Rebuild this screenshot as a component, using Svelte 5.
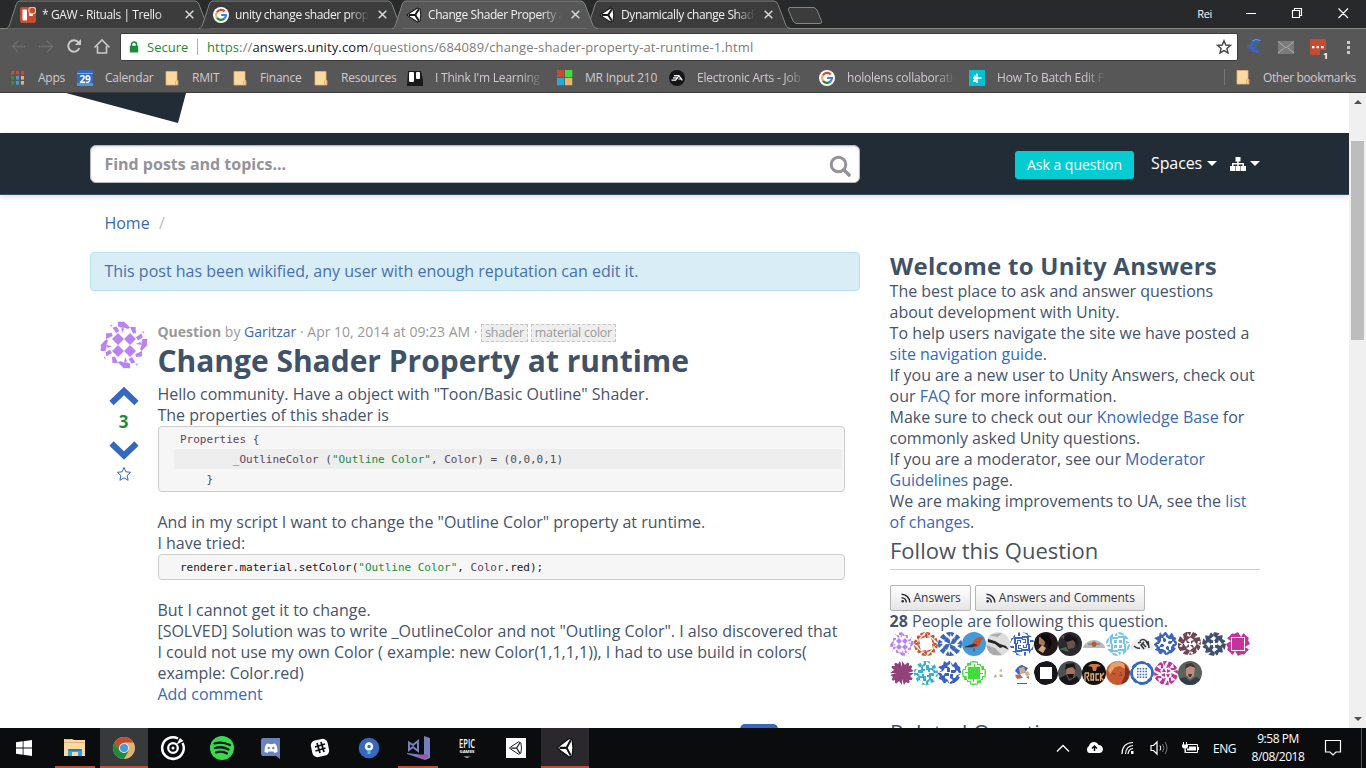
<script>
  const tabs = [
    { icon: 'trello', title: '* GAW - Rituals | Trello' },
    { icon: 'google', title: 'unity change shader prop' },
    { icon: 'unity', title: 'Change Shader Property a', active: true },
    { icon: 'unity', title: 'Dynamically change Shad' }
  ];
  const bookmarks = [
    { icon: 'apps', label: 'Apps' },
    { icon: 'calendar', label: 'Calendar' },
    { icon: 'folder', label: 'RMIT' },
    { icon: 'folder', label: 'Finance' },
    { icon: 'folder', label: 'Resources' },
    { icon: 'board', label: "I Think I'm Learning", fade: true },
    { icon: 'windows', label: 'MR Input 210' },
    { icon: 'ea', label: 'Electronic Arts - Job', fade: true },
    { icon: 'google', label: 'hololens collaboratio', fade: true },
    { icon: 'plus', label: 'How To Batch Edit Ph', fade: true }
  ];
  const diamonds = 'M15 6l3 3l-3 3l-3-3zM12 .3L15 3.200L14 4L12 3.200zM15 3L17.800 3L18 6L16.500 6.300zM18 8L20.800 6.300L21.300 8.300L19 9.700zM21.300 9H24L23 12.500L20.800 11.300zM18 11.500L20 10.500L21.300 12zM21 5l1.400 .5l-.7 .8zM12 .3L9 1L10 3.200L12 3z';
  const avatars = [
    [
      { c: '#b983f5', d: diamonds },
      { c: '#c4532f', d: 'M12 0l3 4l2-4zM16 4l5-2l-1 5zM20 7l4-2v6zM19 10l5 2l-4 2zM12 4l5 1l-5 1zM17 6l3 3l-1 3z' },
      { c: '#3c66bd', d: 'M12 12l3-6l4 3l-3 3zM16 6l4-6l4 4l-6 5zM12 0h5l-3 5zM19 12l5-5v6z' },
      { kind: 'bird' }, { kind: 'cloudy' },
      { c: '#3c66bd', d: 'M12 4h6v9h-1v-7h-5zM12 7h4v4h-3v-1h2V8h-3zM18 3l6 2h-5v8h-2zM12 0l6 1v3l-2-2zM20 8h4v2h-4z' },
      { kind: 'woman' }, { kind: 'dark' }, { kind: 'wide' },
      { c: '#78c4e8', d: 'M12 4h7v8h-2v-6h-5zM13 8h3v3h-3zM12 0h4l3 4l-6-2zM19 3l4 4h-4zM20 9l4 1l-4 2z' },
      { kind: 'sketch' },
      { c: '#3c66bd', d: 'M12 0l3 4l3-4l2 5l4 1l-3 2l4 4h-4l-2-3l-2 3h-2V9h3v-2h-3l-3-2zM14 9.500h2v2h-2z' },
      { c: '#704452', d: 'M12 5l3-5l5 2l-4 4l6-1l3 5l-5-1l-1 4l-3-4l-3 3V9l3-1zM20 12l4-3v4z' },
      { c: '#405070', d: 'M12 0l6 1l-3 3l6-1l-1 4l4 2l-4 3l-3-4l-2 4v-3h-3l2-3l-3-3zM13 8h2v3h-2z' },
      { c: '#c0349b', d: 'M12 6h6v6h-6zM12 0l3 5l3-5l2 4l4 1l-2 3l2 4h-5V5h-7z' }
    ],
    [
      { c: '#92437b', d: 'M12 12V0l3 4l4-4v5l5-2l-3 5l3 2l-6 2zM13 6l4 3l-3 2z' },
      { c: '#39b0d0', d: 'M12 4h3v3h3v2h-2v2h-2V9h-2V7zM12 0h5l-2 3l4 2l2-3l1 5l-3 1l3 2l2-1v3h-4l-2-3V5z' },
      { c: '#3c60c0', d: 'M12 0l3 4l3-4l2 5l4 1l-2 3l3 3h-4l-2-3l-2 3h-2V9h2V7l-3-2zM13 9h2v3h-2z' },
      { c: '#42dd38', d: 'M12 6h6v6h-6zM12 0h4v3h3v2h-1V4h-3V1.500h-3zM12 3h1v3h-1zM19 5h3v3h2v4h-1.500V9h-3z' },
      { c: '#c6ad89', d: 'M13.500 7.500h2.500v3h-2.500z' }, { kind: 'sonic' },
      { c: '#17161c', d: 'M12 0h5l5 5l2 7h-6V6h-6z' },
      { kind: 'man' }, { kind: 'rock' }, { kind: 'orange' },
      { c: '#3568bf', d: 'M12 0q4 0 4 2q5-1 5 3q3 1 3 7h-3q0-5-3-6q-1-3-6-3zM12.700 7h1.600v1.600h-1.600zM15.400 7h1.600v1.600h-1.600zM15.400 9.700h1.600v1.600h-1.600zM12.700 9.700h1.600v1.600h-1.600z' },
      { c: '#c0349b', d: 'M12 7l3-7l4 2l-4 5h5l-1-4l5 3l-3 3h-4l-1-3zM13 8l4 2l-4 2zM19 10l5-1v4z' },
      { kind: 'grin' }
    ]
  ];
  const taskItems = ['explorer', 'chrome', 'groove', 'spotify', 'discord', 'slack', 'maps', 'vs', 'epic', 'unitybox', 'unityapp'];
</script>

{#snippet unityMark(edge, line)}
  <path d="M1 8L4 5.800L11.500 1L14 2L14.800 8L14 14L11.500 15L4 10.200z" fill="#fff" stroke={edge} stroke-width="1.100" stroke-linejoin="round" />
  <path d="M3 8H9.200M9.200 8L12.800 2.300M9.200 8l3.600 5.700" fill="none" stroke={edge} stroke-width={line} />
{/snippet}

{#snippet favicon(name)}
  <svg class="fav" viewBox="0 0 16 16">
    {#if name === 'trello'}
      <rect width="16" height="16" rx="2" fill="#c54c31" />
      <rect x="2.5" y="2.5" width="4.5" height="11" rx=".7" fill="#fff" /><rect x="9" y="4" width="4" height="5" rx=".7" fill="#fff" />
      <circle cx="12.300" cy="3.500" r="4" fill="#f2c3a2" /><circle cx="12.300" cy="3.500" r="2.800" fill="#c54c31" />
    {:else if name === 'google'}
      <circle cx="8" cy="8" r="8" fill="#fff" />
      <g fill="none" stroke-width="2.2">
        <path d="M3.9 5.3A5 5 0 0 1 11.7 4.4" stroke="#d44a30" /><path d="M3.9 5.3A5 5 0 0 0 4 10.8" stroke="#e5b273" />
        <path d="M4 10.8A5 5 0 0 0 11.3 11.7" stroke="#1a8c3a" /><path d="M11.3 11.7A5 5 0 0 0 13 8H8.2" stroke="#3c7fd6" />
      </g>
    {:else if name === 'unity'}
      {@render unityMark('#18191b', 2)}
    {:else if name === 'apps'}
      {#each [0, 1, 2] as r}{#each [0, 1, 2] as c}
        <rect x={1 + c * 5} y={1 + r * 5} width="3" height="3.6" fill={['#c54c31', '#c54c31', '#c54c31', '#1a9a40', '#4a9ad6', '#e5b273', '#1a9a40', '#4a9ad6', '#e5b273'][r * 3 + c]} />
      {/each}{/each}
    {:else if name === 'calendar'}
      <rect y="0" width="16" height="16" rx="1.5" fill="#3568bf" /><path d="M0 3h16v1H0z" fill="#78aee0" /><path d="M0 13h16v3H0z" fill="#4a9ad6" />
      <text x="8" y="12.5" text-anchor="middle" font-family="Open Sans, sans-serif" font-size="10" font-weight="700" fill="#fff">29</text>
    {:else if name === 'folder'}
      <path d="M2 1.500h11v9h1V15H2z" fill="#fcd9a0" stroke="#e5b273" stroke-width=".8" /><path d="M11.500 14.500v-3.500h2v3.500z" fill="#fcd9a0" stroke="#e5b273" />
    {:else if name === 'board'}
      <path d="M1 1h13l2 9v6H0z" fill="#19181b" /><rect x="2" y="2" width="5" height="10" rx="1" fill="#fff" /><rect x="9" y="2" width="4" height="7" rx="1" fill="#fff" />
    {:else if name === 'windows'}
      <path d="M0 0h7.300v7.300H0z" fill="#c54c31" /><path d="M8 0h7.300v7.300H8z" fill="#42dd38" /><path d="M0 8h7.300v7.300H0z" fill="#25a9d8" /><path d="M8 8h7.300v7.300H8z" fill="#e5b273" />
    {:else if name === 'ea'}
      <circle cx="8" cy="8" r="8" fill="#141517" />
      <path d="M5 5.700h4.500M4 7.900h4M2.500 10.200h4.200l3.300-4.500l3.300 4.700M9.500 9h2.500" stroke="#fff" stroke-width="1.200" fill="none" />
    {:else if name === 'plus'}
      <rect width="16" height="16" fill="#05bfd2" /><path d="M8 3.500v9.500M4 8h8.500M6 5.500V12M4 11h3" stroke="#fff" stroke-width="1.500" fill="none" />
    {/if}
  </svg>
{/snippet}

{#snippet rss()}
  <svg class="rss" viewBox="0 0 10 10"><circle cx="1.700" cy="8.300" r="1.300" fill="#2a2e34" /><path d="M.5 4.700A4.800 4.800 0 0 1 5.300 9.500M.5 1.200A8.300 8.300 0 0 1 8.800 9.500" fill="none" stroke="#2a2e34" stroke-width="1.500" /></svg>
{/snippet}

{#snippet avatar(a)}
  <svg class="avatar" viewBox="0 0 24 24">
    <g clip-path="circle(12px at 12px 12px)">
      {#if a.d}
        {#each [0, 90, 180, 270] as r}<path d={a.d} fill={a.c} transform="rotate({r} 12 12)" />{/each}
      {:else if a.kind === 'bird'}
        <path d="M0 0h24v24H0z" fill="#459bd8" /><path d="M3 15l8-4c1-4 4-5 6-6l3 0l2 2l-3 1c0 5-3 8-7 7l-4-1z" fill="#c4532f" /><path d="M3 15l9-3l3 1l-5 2zM12 16v4" fill="#40343e" stroke="#40343e" stroke-width=".7" />
      {:else if a.kind === 'cloudy'}
        <path d="M0 0h24v24H0z" fill="#dedede" /><path d="M2 7l7 2l5 3l6 2l3 4l-6-3l-3 1l-5-4l-7-2z" fill="#252628" /><path d="M0 13l9 3l7 7H4zM2 3l10 2l4-4z" fill="#aaa" />
      {:else if a.kind === 'woman'}
        <path d="M0 0h24v24H0z" fill="#211719" /><path d="M5 5l4 1l2 5l-1 3l-5-2z" fill="#a97859" /><path d="M7 2h8l3 10l-3 6l-3-8l-5-4z" fill="#0d0b0d" /><path d="M8 13l4 3l-3 5l-5-3z" fill="#d3a77c" />
      {:else if a.kind === 'dark'}
        <path d="M0 0h24v24H0z" fill="#282b2d" /><path d="M8 7l6-3l4 5l-2 7l-6 1z" fill="#6d514f" /><path d="M5 7l5-5l9 4l1 8l-5-6l-6 2z" fill="#161519" /><path d="M1 17l7-2l3 5zM3 5l3-2v4z" fill="#53625c" />
      {:else if a.kind === 'wide'}
        <path d="M0 8h24v8H0z" fill="#b9b9b9" /><path d="M6 12h12" stroke="#707070" /><circle cx="12" cy="12" r="2.500" fill="#c4532f" /><path d="M10 13h4v1.500h-4z" fill="#31936b" />
      {:else if a.kind === 'sketch'}
        <path d="M0 6h24v12H0z" fill="#eee" /><path d="M4 14q3 3 6 2M10 9q3-3 6 0l2 4M14 10l-3 3l3 4M18 9l1 7M12 11l4 4M8 11l3-1" stroke="#35373a" stroke-width="1.600" fill="none" />
      {:else if a.kind === 'sonic'}
        <path d="M5 3l7 1l6 3l-3 5l-7 1l-4-4z" fill="#3568bf" /><path d="M9 7l5-1l2 5l-6 2zM15 12l3-2l2 4l-4 1z" fill="#d7aa82" /><path d="M5 14l5-1l3 4l-6 1zM16 16l3-1v3z" fill="#a96f6b" /><path d="M7 22h10v1H7z" fill="#1a8c3a" />
      {:else if a.kind === 'man'}
        <path d="M0 0h24v24H0z" fill="#4c5053" /><path d="M9 6l5-1l3 5l-1 7l-5 1l-3-6z" fill="#a57260" /><path d="M7 9l1-6l8-1l2 7l-3-3l-5 1zM9 13l7 0l-1 4l-4 1zM0 18l8-4l3 6l8-5l5 9H0z" fill="#171719" />
      {:else if a.kind === 'rock'}
        <path d="M0 0h24v24H0z" fill="#151012" /><path d="M6 5l3-2h7l3 2l-4 1l-1 4h-3L10 6z" fill="#c77843" /><path d="M3 12h3.500v3l-1.500 1l2 4M3 12v8M9 13h2.500v6H9zM17 13h-3v6h3M18.500 12v8M22 12l-3.500 4l3.500 4" stroke="#e0b077" stroke-width="1.300" fill="none" />
      {:else if a.kind === 'orange'}
        <path d="M0 0h24v24H0z" fill="#c85a31" /><path d="M5 3l7-3l6 3l1 5l-5-3l-5 1l-5 7l-2-4z" fill="#e5a36c" /><path d="M19 3l5 8l-3 10l-6 2l4-9z" fill="#7e3329" /><path d="M6 12l3 1M14 11l2 3l-3 1" stroke="#86402b" fill="none" />
      {:else}
        <path d="M0 0h24v24H0z" fill="#59645f" /><path d="M8 5l5-2l4 4l-1 8l-4 3l-4-4z" fill="#bd8e7b" /><path d="M7 8l1-5l6-1l4 5l-6-2zM10 13h4l-1 3h-2z" fill="#4a3434" /><path d="M0 18l7-2l5 4l6-4l6 3v6H0z" fill="#333d48" />
      {/if}
    </g>
  </svg>
{/snippet}

<div class="screen">
  <header class="chrome">
    <div class="tabstrip">
      {#each tabs as t}
        <div class="tab" class:active={t.active}>
          <svg class="shape" viewBox="0 0 206 28"><path d="M0 28C2 28 3 26 4 23L10.500 3Q11.500 .5 14 .5H189Q191.500 .5 193 4L201 25Q202 28 206 28" fill={t.active ? '#575757' : '#3c3c3c'} stroke="#858581" /></svg>
          {@render favicon(t.icon)}
          <span class="title">{t.title}</span>
          <svg class="close" viewBox="0 0 9 9"><path d="M.7 .7l7.600 7.600M8.300 .7L.7 8.300" stroke="#d8d8d8" stroke-width="1.500" /></svg>
        </div>
      {/each}
      <svg class="newtab" viewBox="0 0 36 19"><path d="M3 1.500H27L30 4L34.500 15Q35 17.500 33 17.500H9L6 15L1.500 4Q1 1.500 3 1.500z" fill="#3c3c3c" stroke="#858581" /></svg>
      <span class="user">Rei</span>
      <svg class="winbtns" viewBox="0 0 136 28" fill="none" stroke="#fff"><path d="M16 13.500h10M62.500 10.500h7v7h-7zM64.500 10.500V8.500h7v7H69.500M108.500 8.500l9.500 9.500M118 8.500l-9.500 9.500" stroke-width="1.150" /></svg>
    </div>
    <div class="toolbar">
      <svg class="nav" viewBox="0 0 112 30" fill="none">
        <path d="M25 14.500H13M18 9l-5.500 5.500L18 20M39 14.500H52M47 9l5.500 5.500L47 20" stroke="#747474" stroke-width="1.300" stroke-dasharray="1.500 .6" />
        <path d="M78.500 10.500A5.700 5.700 0 1 0 79.300 16" stroke="#c9c9c9" stroke-width="2" /><path d="M81 7v6h-6z" fill="#c9c9c9" />
        <path d="M94.500 15.500L102 8l7.500 7.500M97.500 14v7h9v-7" stroke="#c9c9c9" stroke-width="1.600" />
      </svg>
      <div class="omnibox">
        <svg class="lock" viewBox="0 0 10 12"><path d="M2.500 6V3.500a2.500 2.500 0 0 1 5 0V6" fill="none" stroke="#1a8c3a" stroke-width="1.500" /><rect x=".8" y="4.800" width="8.400" height="6.600" rx=".7" fill="#1a8c3a" /></svg>
        <span class="secure">Secure</span><i class="bar"></i>
        <span class="url"><span class="https">https</span>://<b>answers.unity.com</b>/questions/684089/change-shader-property-at-runtime-1.html</span>
        <svg class="star" viewBox="0 0 16 16"><path d="M8 1.800l1.800 4.200l4.600.4l-3.500 3l1.100 4.500L8 11.500l-4 2.400l1.100-4.500l-3.500-3l4.600-.4z" fill="none" stroke="#4b4b4b" stroke-width="1.500" /></svg>
      </div>
      <svg class="ext" viewBox="0 0 128 34">
        <path d="M22 11.500Q15 9 13 16.500Q14 22 21 21" fill="none" stroke="#3c66bd" stroke-width="3" /><path d="M9 15.500h11M9 18h10" stroke="#3c66bd" stroke-width="1.500" /><path d="M14 11Q18 8 22.500 10.500" stroke="#57a3e0" fill="none" />
        <rect x="40" y="11" width="16" height="13" fill="#7b7b7b" /><path d="M40 11.500l8 6.500l8-6.500M40 23l6-5M56 23l-6-5" fill="none" stroke="#b1b1b1" stroke-width="1" />
        <rect x="72" y="9" width="16" height="16" rx="2" fill="#c54c31" /><path d="M74 16h2.500v2.300H74zM78.500 16H81v2.300h-2.500zM83 16h2.500v2.300H83z" fill="#fff" />
        <rect x="82" y="20" width="11" height="10" fill="#575757" /><text x="85" y="29" font-family="Open Sans, sans-serif" font-size="9" font-weight="700" fill="#fff">1</text>
        <path d="M109 11h3v3h-3zM109 16h3v3h-3zM109 21h3v3h-3z" fill="#c9c9c9" />
      </svg>
    </div>
    <nav class="bookmarks">
      {#each bookmarks as b}
        <span class="bm">{@render favicon(b.icon)}<span class="label" class:fade={b.fade}>{b.label}</span></span>
      {/each}
      <span class="bm other">{@render favicon('folder')}<span class="label">Other bookmarks</span></span>
    </nav>
  </header>

  <div class="viewport">
    <div class="page">
      <div class="logo"><svg viewBox="0 0 200 40"><path d="M66 0H186L178 30z" fill="#222c37" /></svg></div>
      <div class="navbar">
        <div class="search"><span>Find posts and topics...</span>
          <svg viewBox="0 0 22 22" fill="none" stroke="#95929a"><circle cx="9.500" cy="9.500" r="7.300" stroke-width="3" /><path d="M15 15l5 5" stroke-width="3.600" stroke-linecap="round" /></svg>
        </div>
        <div class="ask">Ask a question</div>
        <span class="spaces">Spaces</span><i class="caret"></i>
        <svg class="sitemap" viewBox="0 0 16 14"><path d="M5.500 0h5v4.500H8.700V6H14v3h2v5h-5V9h1.500V7.500H8.700V9h1.800v5h-5V9h1.800V7.500H3.500V9H5v5H0V9h2V6h5.300V4.500H5.500z" fill="#fff" /></svg><i class="caret"></i>
      </div>
      <div class="columns">
        <main>
          <div class="crumbs"><a href="#home">Home</a><span>/</span></div>
          <div class="alert">This post has been wikified, any user with enough reputation can edit it.</div>
          <article>
            <aside class="votes">
              <div class="face">{@render avatar(avatars[0][0])}</div>
              <svg class="arrow" viewBox="0 0 30 20"><path d="M2.500 17L15 5l12.500 12" fill="none" stroke="#3568bf" stroke-width="6" /></svg>
              <b>3</b>
              <svg class="arrow down" viewBox="0 0 30 20"><path d="M2.500 3.500L15 15.500l12.500-12" fill="none" stroke="#3568bf" stroke-width="6" /></svg>
              <svg class="fave" viewBox="0 0 16 16"><path d="M8 1.500l1.900 4.300l4.700.5l-3.500 3.200l1 4.800L8 11.800l-4.100 2.500l1-4.800L1.400 6.300l4.700-.5z" fill="none" stroke="#3568bf" stroke-width="1" /></svg>
            </aside>
            <div class="post">
              <div class="meta"><b>Question</b> by <a href="#user">Garitzar</a> · Apr 10, 2014 at 09:23 AM · <span class="tag">shader</span><span class="tag">material color</span></div>
              <h1>Change Shader Property at runtime</h1>
              <p>Hello community. Have a object with "Toon/Basic Outline" Shader.<br />The properties of this shader is</p>
              <pre><span class="ln"><i>Properties</i> {'{'}</span><span class="ln odd">{'        '}<i>_OutlineColor</i> (<em>"Outline Color"</em>, <i>Color</i>) = (0,0,0,1)</span><span class="ln">{'    }'}</span></pre>
              <p>And in my script I want to change the "Outline Color" property at runtime.<br />I have tried:</p>
              <pre class="one"><span class="ln plain">renderer.material.setColor(<em>"Outline Color"</em>, <i>Color</i>.red);</span></pre>
              <p>But I cannot get it to change.<br />[SOLVED] Solution was to write _OutlineColor and not "Outling Color". I also discovered that<br />I could not use my own Color ( example: new Color(1,1,1,1)), I had to use build in colors(<br />example: Color.red)<br /><a href="#comment">Add comment</a></p>
            </div>
          </article>
          <div class="below"></div>
        </main>
        <aside class="side">
          <h2>Welcome to Unity Answers</h2>
          <p>The best place to ask and answer questions<br />about development with Unity.<br />To help users navigate the site we have posted a<br /><a href="#nav">site navigation guide</a>.<br />If you are a new user to Unity Answers, check out<br />our <a href="#faq">FAQ</a> for more information.<br />Make sure to check out our <a href="#kb">Knowledge Base</a> for<br />commonly asked Unity questions.<br />If you are a moderator, see our <a href="#mod">Moderator<br />Guidelines</a> page.<br />We are making improvements to UA, see the <a href="#list">list<br />of changes</a>.</p>
          <h3>Follow this Question</h3>
          <div class="feeds"><span>{@render rss()}Answers</span><span>{@render rss()}Answers and Comments</span></div>
          <p class="count"><b>28</b> People are following this question.</p>
          {#each avatars as row}
            <div class="faces">{#each row as a}{@render avatar(a)}{/each}</div>
          {/each}
          <h3 class="related">Related Questions</h3>
        </aside>
      </div>
    </div>
    <div class="scroll"><i class="up"></i><div class="thumb"></div><i class="dn"></i></div>
  </div>

  <footer>
    <div class="start"><svg viewBox="0 0 16 16"><path d="M0 2.300L6.700 1.300v6.300H0zM7.500 1.200L16 0v7.600H7.500zM0 8.400h6.700v6.300L0 13.700zM7.500 8.400H16V16l-8.500-1.200z" fill="#fff" /></svg></div>
    {#each taskItems as t}
      <div class="task {t}">
        <svg viewBox="0 0 26 26">
          {#if t === 'explorer'}
            <path d="M2 4h8l2 1h11v16H2z" fill="#fcd9a0" /><path d="M3 4h6v1H3zM2 7h21v1H2z" fill="#e5b273" /><path d="M6 14h14v7h-4v-4h-6v4H6z" fill="#25a9d8" /><path d="M6 14h14l-1 2H7z" fill="#1682c4" />
          {:else if t === 'chrome'}
            <circle cx="13" cy="13" r="11" fill="#e5b273" /><path d="M3.500 7.500A11 11 0 0 1 22.500 7.500H13L8 15z" fill="#c54c31" /><path d="M3.500 7.500A11 11 0 0 0 13 24L18 15L13 18L8 15z" fill="#1a8c3a" /><circle cx="13" cy="13" r="5" fill="#e8eef2" /><circle cx="13" cy="13" r="4" fill="#459bd8" />
          {:else if t === 'groove'}
            <path d="M18 3.500A10.800 10.800 0 1 0 22.500 8" fill="none" stroke="#fff" stroke-width="2.500" /><circle cx="13" cy="13" r="4.800" fill="none" stroke="#fff" stroke-width="2.300" /><circle cx="13" cy="13" r="1.500" fill="#fff" /><path d="M16.500 9.500L20 3l3.500 3z" fill="#fff" />
          {:else if t === 'spotify'}
            <circle cx="13" cy="13" r="12" fill="#36dc4c" /><path d="M5.500 8.500Q13 6 21 10M6 13Q13 11 19.500 14.500M7 17.500Q13 15.500 18 18.500" fill="none" stroke="#10151a" stroke-width="2.300" stroke-linecap="round" />
          {:else if t === 'discord'}
            <path d="M5 3h17v21l-4-3H5Q3 21 3 18V6Q3 3 5 3z" fill="#6b83be" /><path d="M6.500 17q0-6 2-8q2-1 3 0h3q2-1 3 0q2 2 2 8l-3 1l-1-1.500h-5L9.500 18z" fill="#fff" /><circle cx="10.700" cy="13" r="1.200" fill="#6b83be" /><circle cx="15.300" cy="13" r="1.200" fill="#6b83be" />
          {:else if t === 'slack'}
            <rect x="4.500" y="4.500" width="17" height="17" rx="5" transform="rotate(-12 13 13)" fill="#fff" /><path d="M10 8l3 10M14 7l3 10M8 12l10-3M8.500 16l10-3" stroke="#111" stroke-width="1.800" />
          {:else if t === 'maps'}
            <circle cx="13" cy="13" r="10.300" fill="#3568bf" /><circle cx="13" cy="11.500" r="3" fill="none" stroke="#fff" stroke-width="2.500" /><path d="M13 15v4" stroke="#5dbbe8" stroke-width="3" />
          {:else if t === 'vs'}
            <path d="M19 1l6 2v20l-5 2L2 19v-1l17 2z" fill="#777fbe" /><path d="M4 7.500l4 2.500l5-4v10l-5-4l-4 3z" fill="none" stroke="#777fbe" stroke-width="2" /><path d="M20 19l3 1v2l-3 2l-8-3z" fill="#a252ac" />
          {:else if t === 'epic'}
            <text x="5" y="12.500" textLength="16" lengthAdjust="spacingAndGlyphs" font-family="Open Sans, sans-serif" font-weight="600" font-size="12.500" fill="#fff">EPIC</text><text x="5.500" y="18" textLength="15" lengthAdjust="spacingAndGlyphs" font-family="Open Sans, sans-serif" font-weight="700" font-size="4" fill="#fff">GAMES</text><path d="M9.500 21.500h7l-3.500 1.500z" fill="#ccc" />
          {:else if t === 'unitybox'}
            <path d="M3 3h20v20H3z" fill="#fff" /><g transform="translate(5.500 6) scale(.88)">{@render unityMark('#17191c', 1.4)}</g>
          {:else}
            <g transform="translate(4 2) scale(1.150 1.350)">{@render unityMark('#101113', 1.7)}</g>
          {/if}
        </svg>
      </div>
    {/each}
    <div class="tray">
      <svg viewBox="0 0 156 40" fill="none" stroke="#fff">
        <path d="M9 23.500l6-6l6 6" stroke-width="1.300" />
        <path d="M42 25a4 4 0 0 1 0-7q1-4 5-4q3 0 4.500 3q4 0 4.500 4.500q-.5 3.500-4 3.500z" fill="#fff" stroke="none" transform="translate(-1 0)" /><path d="M46.500 23v-5M44 20.500l2.500-2.500l2.500 2.500" stroke="#0b0c0e" stroke-width="1.500" />
        <path d="M75 26Q75 15 86 14.500M78.500 26Q79 18 86 17.500M81 26Q81.500 21 86 20.500" stroke-width="1.200" transform="translate(-1 0)" /><path d="M83 23h2.500v3H83z" fill="#fff" stroke="none" />
        <path d="M104 17.500h2.500L110 14v12l-3.500-3.500H104z" stroke-width="1.200" transform="translate(-1 0)" /><path d="M112 17.500q1.500 2.500 0 5" /><path d="M114.500 16q3 4 0 8M117 14q4 6 0 12" stroke="#777" />
        <path d="M139.500 16.500h10v8h-12v-3" /><path d="M141 18.500h7v4h-9v-2h2z" fill="#fff" stroke="none" /><path d="M150.500 19v3M135.500 14v3M138.500 14v3" /><path d="M134 16.500h6v2.500l-1.500 1.500h-3L134 19z" fill="#fff" stroke="none" /><path d="M137 20v5" />
      </svg>
      <span class="lang">ENG</span>
      <div class="clock"><span>9:58 PM</span><span>8/08/2018</span></div>
      <svg class="note" viewBox="0 0 18 18"><path d="M1.500 1.500h15v11.500H12l-3 3l-3-3H1.500z" fill="none" stroke="#fff" stroke-width="1.200" /></svg>
      <i class="peek"></i>
    </div>
  </footer>
</div>

<style>
  :global(body) { margin: 0; overflow: hidden; background: #fff; }
  .screen { width: 1366px; height: 768px; display: flex; flex-direction: column; font-family: 'Open Sans', sans-serif; overflow: hidden; }
  svg { display: block; flex: none; }
  a { color: #3a69b3; text-decoration: none; }
  i { font-style: normal; }
  .chrome { height: 93px; flex: none; background: #575757; border-bottom: 1px solid #3c3c3c; box-sizing: border-box; }
  .tabstrip { height: 29px; box-sizing: border-box; background: #27292b; border-bottom: 1px solid #858581; display: flex; padding-left: 6px; }
  .tab { position: relative; width: 206px; height: 29px; margin-right: -13px; display: flex; align-items: center; padding: 0 18.5px 0 14px; box-sizing: border-box; flex: none; }
  .tab.active { z-index: 2; }
  .shape { position: absolute; left: 0; top: 0; width: 206px; height: 29px; z-index: 0; }
  .fav { width: 16px; height: 16px; position: relative; }
  .title { position: relative; width: 134px; margin-left: 6px; white-space: nowrap; font-size: 12px; letter-spacing: -.4px; color: #f0f0f0; -webkit-mask-image: linear-gradient(90deg, #000 114px, transparent 134px); mask-image: linear-gradient(90deg, #000 114px, transparent 134px); }
  .close { position: relative; width: 9px; height: 9px; margin-left: auto; }
  .newtab { width: 36px; height: 19px; margin: 6px 0 0 9px; }
  .user { margin-left: auto; padding: 6px 18px 0 0; color: #fff; font-size: 11px; letter-spacing: -.3px; }
  .winbtns { width: 136px; height: 28px; }
  .toolbar { height: 33px; display: flex; align-items: center; }
  .nav { width: 112px; height: 30px; margin-right: 8px; margin-top: 3px; }
  .omnibox { width: 1118px; height: 28px; margin-top: 3px; box-sizing: border-box; border: 1px solid #3c3c3c; border-radius: 2px; background: #fff; display: flex; align-items: center; padding: 0 5px 0 8px; font-size: 13px; flex: none; }
  .lock { width: 10px; height: 12px; margin-right: 8px; }
  .secure { color: #1a8c3a; width: 50px; letter-spacing: 0; }
  .bar { width: 1px; height: 16px; background: #b0b0b0; margin-right: 9px; }
  .url { color: #7c7c75; letter-spacing: .14px; white-space: nowrap; }
  .url b { color: #202124; font-weight: 400; }
  .https { color: #1a8c3a; }
  .star { width: 16px; height: 16px; margin-left: auto; }
  .ext { width: 128px; height: 34px; margin-top: 3px; }
  .bookmarks { height: 31px; display: grid; grid-template-columns: 67px 87px 68px 81px 94px 150px 112px 150px 150px 255px auto; padding-left: 10px; color: #d1c8d2; font-size: 12px; }
  .bm { display: flex; align-items: center; gap: 12px; white-space: nowrap; letter-spacing: -.22px; }
  .fade { width: 108px; -webkit-mask-image: linear-gradient(90deg, #000 88px, transparent 108px); mask-image: linear-gradient(90deg, #000 88px, transparent 108px); }
  .other { border-left: 1px solid #777; margin: 7px 0 8px; padding-left: 10px; height: 16px; letter-spacing: -.37px; }
  .viewport { height: 635px; display: flex; overflow: hidden; flex: none; }
  .page { width: 1349px; background: #fff; flex: none; }
  .logo { height: 40px; }
  .logo svg { width: 200px; height: 40px; }
  .navbar { height: 62px; box-sizing: border-box; background: #222c37; border-bottom: 1px solid #34506d; box-shadow: 0 2px 6px rgba(0,0,0,.14); display: flex; align-items: center; padding-left: 90px; color: #fff; }
  .search { width: 770px; height: 38px; background: #fff; box-sizing: border-box; border: 1px solid #bbb; border-radius: 6px; box-shadow: inset 0 1px 2px #ddd; display: flex; align-items: center; justify-content: space-between; padding: 0 8px 0 13.4px; color: #95929a; font-weight: 700; font-size: 16px; }
  .search svg { width: 22px; height: 22px; margin-top: 4px; }
  .ask { width: 119px; height: 28px; line-height: 28px; margin: 2px 17px 0 155px; background: #04ccd0; border-radius: 3px; font-size: 14px; text-align: center; }
  .spaces { font-size: 16px; margin-top: -2px; width: 52px; letter-spacing: -.1px; }
  .caret { border: 5px solid transparent; border-top-color: #fff; border-bottom: 0; margin-left: 4px; }
  .sitemap { width: 16px; height: 14px; margin-left: 13px; }
  .columns { display: grid; grid-template-columns: 770px 370px; gap: 30px; padding-left: 90px; }
  .crumbs { padding-left: 14.4px; height: 57px; line-height: 56px; font-size: 16px; }
  .crumbs span { color: #bbb; margin-left: 9.500px; }
  .alert { height: 39px; line-height: 37px; box-sizing: border-box; border: 1px solid #b5e3f2; border-radius: 4px; background: #d9edf7; color: #4770ae; padding-left: 13.4px; font-size: 16px; }
  article { display: flex; padding-top: 30px; }
  .votes { width: 67px; box-sizing: border-box; display: flex; flex-direction: column; align-items: center; flex: none; }
  .face { width: 48px; height: 48px; }
  .avatar { width: 24px; height: 24px; }
  .face :global(.avatar) { width: 48px; height: 48px; }
  .arrow { width: 30px; height: 20px; margin-top: 17px; }
  .votes b { color: #1a8c3a; font-size: 17px; line-height: 20px; margin-top: 6px; }
  .arrow.down { margin-top: 8px; }
  .fave { width: 16px; height: 16px; margin-top: 6px; }
  .post { width: 688px; padding-left: 1px; color: #46536a; }
  .post p, .post .meta, .post h1 { margin-left: -.6px; }
  .meta { height: 22px; line-height: 22px; font-size: 14px; color: #999; white-space: nowrap; }
  .tag { display: inline-block; border: 1px dashed #c5c5c5; background: #eee; font-size: 12.4px; line-height: 16px; padding: 0 3px; margin-right: 3px; letter-spacing: -.22px; }
  h1 { margin: -2px 0 0; padding-bottom: 3px; font-size: 30px; line-height: 40px; font-weight: 700; letter-spacing: -.02px; color: #405267; white-space: nowrap; }
  p { margin: 0; font-size: 16px; line-height: 21px; color: #46536a; white-space: nowrap; }
  pre { margin: 0 0 20px; height: 66px; width: 687px; box-sizing: border-box; border: 1px solid #ccc; border-radius: 4px; background: #f6f6f6; padding: 2px 2px 2px 15px; font: 11px/22px 'DejaVu Sans Mono', monospace; letter-spacing: -.02px; color: #4a4d58; }
  .ln { display: block; padding-left: 6px; height: 20px; }
  pre.one { height: 26px; }
  .odd { background: #eee; }
  pre i { color: #60435f; }
  pre em { font-style: normal; color: #1a8c3a; }
  .plain { color: #17181a; }
  .below { width: 38px; height: 20px; border-radius: 5px; background: #3568bf; margin: 19px 0 0 650px; }
  .side { padding-top: 55px; }
  .side p { margin-left: -.4px; letter-spacing: -.015px; }
  h2 { margin: 0; font-size: 24px; letter-spacing: .26px; line-height: 31px; font-weight: 700; color: #405267; white-space: nowrap; }
  h3 { margin: 0; height: 37px; box-sizing: border-box; border-bottom: 1px solid #ccc; font-size: 22px; line-height: 35px; font-weight: 400; color: #4a5260; white-space: nowrap; }
  .feeds { display: flex; gap: 4px; margin-top: 15px; }
  .feeds span { height: 26px; box-sizing: border-box; border: 1px solid #b5b5b5; border-radius: 2px; background: linear-gradient(#fff, #e5e5e5); font-size: 12px; color: #33363c; display: flex; align-items: center; padding: 0 9.5px; gap: 3px; white-space: nowrap; line-height: 23px; align-items: center; padding-bottom: 1px; }
  .rss { width: 10px; height: 10px; }
  .faces { display: flex; height: 29px; }
  .related { margin-top: 25px; }
  .scroll { width: 17px; background: #f0f0f0; display: flex; flex-direction: column; align-items: center; }
  .up { border: 4px solid transparent; border-bottom-color: #505050; border-top: 0; margin-top: 7px; }
  .thumb { width: 13px; height: 199px; background: #bdbdbd; margin-top: 37px; }
  .dn { border: 4px solid transparent; border-top-color: #505050; border-bottom: 0; margin: auto 0 7px; }
  footer { height: 40px; background: #0b0c0e; display: flex; flex: none; }
  .start { width: 51px; box-sizing: border-box; padding: 12px 0 0 16px; }
  .start svg { width: 16px; height: 16px; }
  .task { width: 48px; margin-right: 1px; box-sizing: border-box; padding: 7px 0 0 11px; border-bottom: 2px solid transparent; flex: none; }
  .task svg { width: 26px; height: 26px; }
  .chrome.task { height: 40px; background: #38393a; border-bottom-color: #c54c31; }
  .unityapp { background: #2a282d; border-bottom-color: #c54c31; }
  .explorer, .vs { background: linear-gradient(#c54c31, #c54c31) 4px 100% / 40px 2px no-repeat border-box; }
  .tray { margin-left: auto; display: flex; align-items: center; color: #fff; font-size: 12px; }
  .tray > svg:first-child { width: 156px; height: 40px; }
  .lang { width: 30px; margin-left: 9px; letter-spacing: -.5px; }
  .clock { width: 70px; display: flex; flex-direction: column; text-align: center; line-height: 18px; letter-spacing: -.45px; }
  .note { width: 18px; height: 18px; margin: 0 19px 0 11px; }
  .peek { width: 1px; height: 40px; background: #555; margin-right: 4px; }
</style>
